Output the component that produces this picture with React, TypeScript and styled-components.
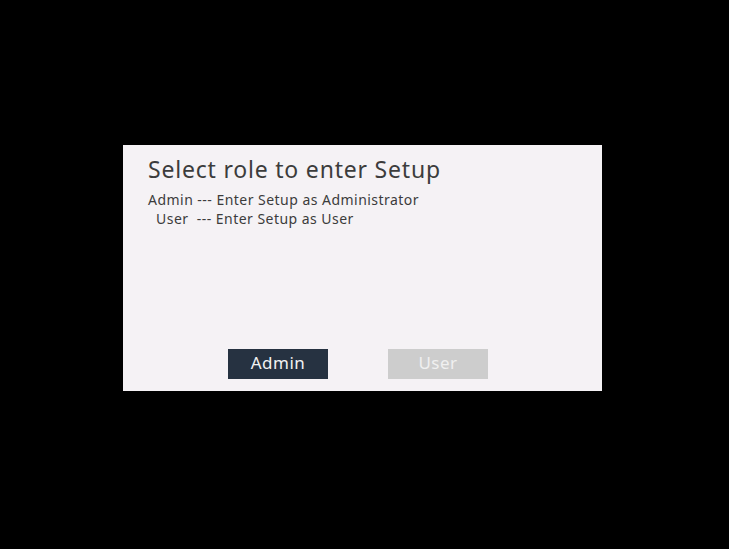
import React from "react";
import styled, { createGlobalStyle } from "styled-components";

const Global = createGlobalStyle`
  html, body { margin: 0; padding: 0; background: #000; }
  body { width: 729px; height: 549px; overflow: hidden; font-family: "Noto Sans", "Open Sans", sans-serif; }
`;

const Screen = styled.div`
  width: 729px;
  height: 549px;
  padding: 145px 0 0 123px;
  box-sizing: border-box;
  background: #000;
`;

const Dialog = styled.div`
  width: 479px;
  height: 246px;
  box-sizing: border-box;
  background: #f5f2f5;
  padding: 8px 0 0 25px;
  display: flex;
  flex-direction: column;
`;

const Title = styled.h1`
  margin: 0;
  font-size: 23px;
  font-weight: 400;
  color: #3c3c3c;
  line-height: 32px;
  letter-spacing: 0.8px;
`;

const Line = styled.div<{ $indent?: number }>`
  font-size: 14px;
  color: #3c3c3c;
  line-height: 19px;
  letter-spacing: 0.47px;
  padding-left: ${(p) => p.$indent ?? 0}px;
  white-space: pre;
`;

const Lines = styled.div`
  margin-top: 5px;
`;

const Buttons = styled.div`
  margin-top: auto;
  margin-bottom: 12px;
  margin-left: 80px;
  display: flex;
  gap: 60px;
`;

const Button = styled.button<{ $active?: boolean }>`
  width: 100px;
  height: 30px;
  border: none;
  padding: 0 0 3px;
  font-family: "Noto Sans", "Open Sans", sans-serif;
  font-size: 17px;
  color: ${(p) => (p.$active ? "#f2f2f2" : "#f0f0f0")};
  background: ${(p) => (p.$active ? "#263241" : "#cdcdcd")};
  letter-spacing: 0.5px;
`;

export default function App() {
  return (
    <>
      <Global />
      <Screen>
        <Dialog>
          <Title>Select role to enter Setup</Title>
          <Lines>
            <Line>Admin --- Enter Setup as Administrator</Line>
            <Line $indent={8}>User  --- Enter Setup as User</Line>
          </Lines>
          <Buttons>
            <Button $active>Admin</Button>
            <Button>User</Button>
          </Buttons>
        </Dialog>
      </Screen>
    </>
  );
}
